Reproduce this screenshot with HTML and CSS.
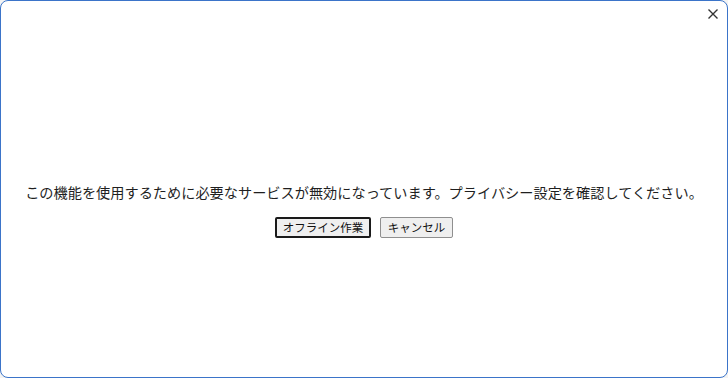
FILE: index.html
```html
<!DOCTYPE html>
<html lang="ja">
<head>
    <meta charset="utf-8">
    <title>サービス無効</title>
    <link rel="stylesheet" href="styles.css">
</head>
<body>
    <div class="dialog-window">
        <button class="dialog-close" type="button" aria-label="閉じる">
            <svg width="12" height="12" viewBox="0 0 12 12" aria-hidden="true">
                <path d="M1.5 1.5 L10.5 10.5 M10.5 1.5 L1.5 10.5" stroke="#333" stroke-width="1.4" fill="none"/>
            </svg>
        </button>
        <main class="dialog-body">
            <p class="dialog-message">この機能を使用するために必要なサービスが無効になっています。プライバシー設定を確認してください。</p>
            <div class="dialog-actions">
                <button class="dialog-btn dialog-btn--primary" type="button">オフライン作業</button>
                <button class="dialog-btn" type="button">キャンセル</button>
            </div>
        </main>
    </div>
</body>
</html>
```

FILE: styles.css
```css
* {
    margin: 0;
    padding: 0;
    box-sizing: border-box;
}

html, body {
    height: 100%;
}

body {
    background: #f3f3f3;
    font-family: "Noto Sans CJK JP", "Noto Sans", sans-serif;
    color: #1a1a1a;
}

.dialog-window {
    position: relative;
    height: 100%;
    background: #fff;
    border: 1px solid #3b74c9;
    border-radius: 8px;
    display: flex;
    align-items: center;
    justify-content: center;
}

.dialog-close {
    position: absolute;
    top: 5px;
    right: 6px;
    width: 16px;
    height: 16px;
    border: none;
    background: transparent;
    display: flex;
    align-items: center;
    justify-content: center;
}

.dialog-body {
    display: flex;
    flex-direction: column;
    align-items: center;
    margin-top: 42px;
}

.dialog-message {
    font-size: 14.2px;
    line-height: 20px;
    color: #1f1f1f;
}

.dialog-actions {
    display: flex;
    gap: 9px;
    margin-top: 15px;
}

.dialog-btn {
    font-family: inherit;
    font-size: 11.5px;
    line-height: 15px;
    padding: 2px 6.75px;
    height: 21px;
    color: #111;
    background: #efefef;
    border: 1px solid #8f8f8f;
    border-radius: 2px;
}

.dialog-btn--primary {
    border: 2px solid #1a1a1a;
    padding: 1px 5.75px;
}
```
